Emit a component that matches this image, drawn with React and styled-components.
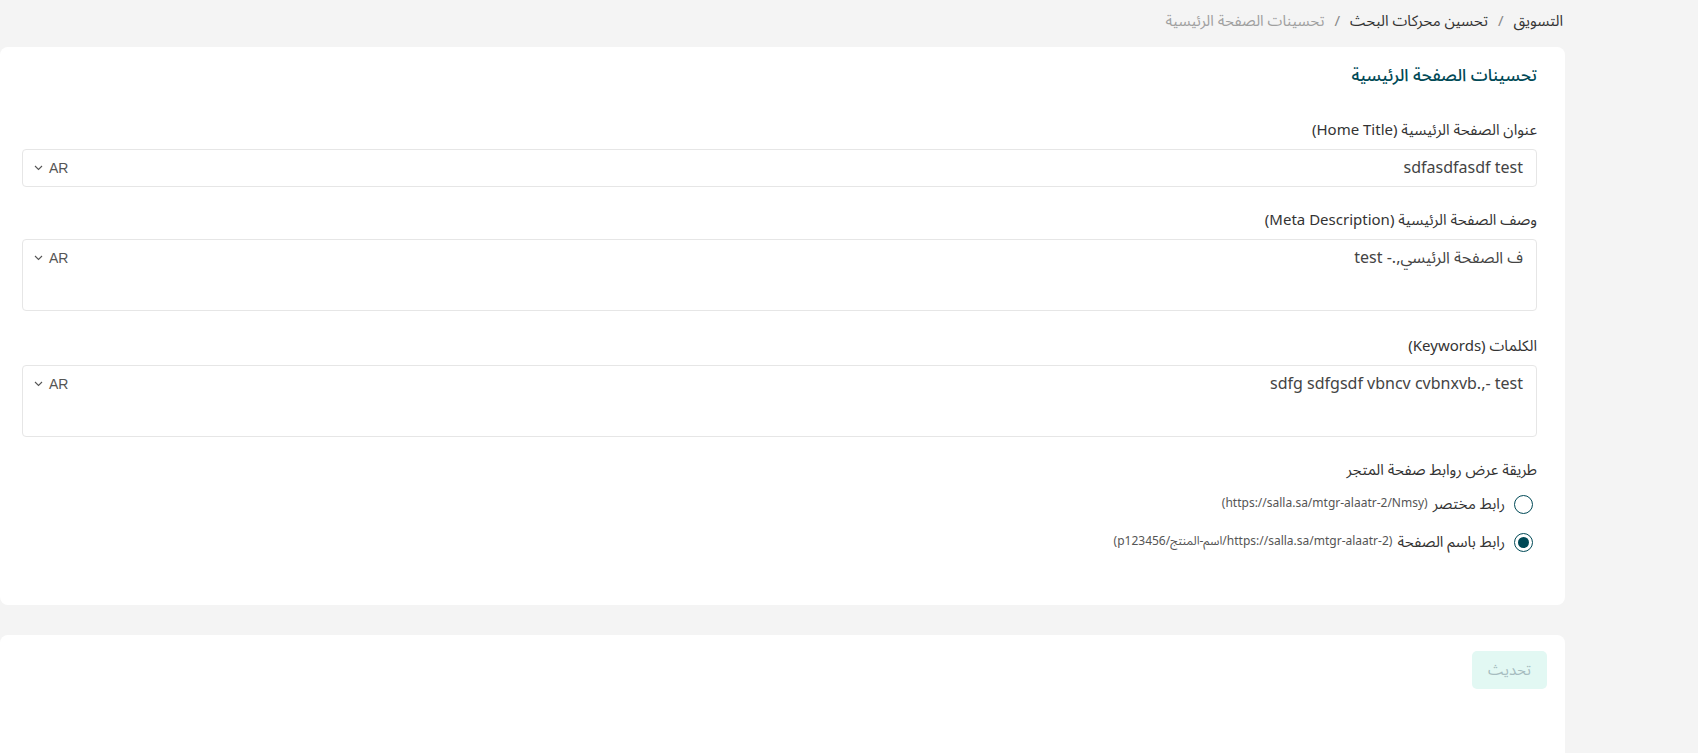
import React from 'react';
import styled, { createGlobalStyle } from 'styled-components';

const GlobalStyle = createGlobalStyle`
  html, body {
    margin: 0;
    padding: 0;
    background: #f4f4f4;
    font-family: "Noto Sans Arabic", "Noto Sans", "DejaVu Sans", sans-serif;
  }
  * { box-sizing: border-box; }
`;

const Page = styled.div`
  direction: rtl;
  min-height: 753px;
  padding-right: 133px;
  overflow: hidden;
`;

const Breadcrumb = styled.nav`
  height: 47px;
  display: flex;
  align-items: center;
  gap: 8px;
  padding: 0 2px 6px 0;
  font-size: 15px;
  color: #333;
`;

const Crumb = styled.span`
  color: ${(p) => (p.$current ? '#a0a0a0' : '#333')};
`;

const Sep = styled.span`
  color: #888;
  padding: 0 2px;
`;

const Card = styled.section`
  background: #fff;
  border-radius: 8px;
  padding: ${(p) => p.$pad};
  min-height: ${(p) => p.$minH || 'auto'};
`;

const Title = styled.h2`
  margin: 0 0 32px;
  font-size: 17px;
  line-height: 24px;
  font-weight: 500;
  color: #004956;
`;

const Field = styled.div`
  margin-bottom: ${(p) => p.$gap || '23px'};
`;

const Label = styled.div`
  font-size: 15px;
  line-height: 20px;
  color: #333;
  margin-bottom: 9px;
`;

const InputBox = styled.div`
  display: flex;
  align-items: ${(p) => (p.$multi ? 'flex-start' : 'center')};
  justify-content: space-between;
  height: ${(p) => (p.$multi ? '72px' : '38px')};
  border: 1px solid #e6e6e6;
  border-radius: 4px;
  padding: ${(p) => (p.$multi ? '8px 13px 0 11px' : '0 13px 0 11px')};
`;

const Value = styled.span`
  font-size: 16px;
  line-height: 20px;
  color: #444;
`;

const Lang = styled.span`
  display: flex;
  align-items: center;
  gap: 6px;
  direction: ltr;
  font-family: "Liberation Sans", Arial, sans-serif;
  font-size: 14px;
  line-height: 20px;
  color: #555;
`;

const RadioList = styled.div`
  display: flex;
  flex-direction: column;
  gap: 18px;
  padding-right: 4px;
  margin-top: 14px;
`;

const RadioRow = styled.label`
  display: flex;
  align-items: center;
  gap: 9px;
  font-size: 15px;
  color: #333;
  line-height: 20px;
`;

const Circle = styled.span`
  width: 19px;
  height: 19px;
  border-radius: 50%;
  border: 1.5px solid #004956;
  display: flex;
  align-items: center;
  justify-content: center;
  flex-shrink: 0;
  &::after {
    content: '';
    width: 11px;
    height: 11px;
    border-radius: 50%;
    background: ${(p) => (p.$on ? '#004956' : 'transparent')};
  }
`;

const Url = styled.span`
  font-size: 12px;
  color: #555;
  margin-right: -4px;
`;

const Footer = styled.div`
  margin-top: 30px;
`;

const Button = styled.button`
  display: block;
  width: 75px;
  height: 38px;
  border: none;
  border-radius: 5px;
  background: #e2f8f3;
  color: #a6bcbf;
  font-family: inherit;
  font-size: 15px;
`;

const Chevron = () => (
  <svg width="9" height="6" viewBox="0 0 9 6" fill="none">
    <path d="M1 1l3.5 3.5L8 1" stroke="#555" strokeWidth="1.1" />
  </svg>
);

const LangPick = () => (
  <Lang>
    <Chevron />
    AR
  </Lang>
);

export default function App() {
  return (
    <>
      <GlobalStyle />
      <Page>
        <Breadcrumb>
          <Crumb>التسويق</Crumb>
          <Sep>/</Sep>
          <Crumb>تحسين محركات البحث</Crumb>
          <Sep>/</Sep>
          <Crumb $current>تحسينات الصفحة الرئيسية</Crumb>
        </Breadcrumb>

        <Card $pad="17px 28px 53px 22px">
          <Title>تحسينات الصفحة الرئيسية</Title>

          <Field>
            <Label>عنوان الصفحة الرئيسية (Home Title)</Label>
            <InputBox>
              <Value>sdfasdfasdf test</Value>
              <LangPick />
            </InputBox>
          </Field>

          <Field $gap="25px">
            <Label>وصف الصفحة الرئيسية (Meta Description)</Label>
            <InputBox $multi>
              <Value>ف الصفحة الرئيسي,.- test</Value>
              <LangPick />
            </InputBox>
          </Field>

          <Field>
            <Label>الكلمات (Keywords)</Label>
            <InputBox $multi>
              <Value>sdfg sdfgsdf vbncv cvbnxvb.,- test</Value>
              <LangPick />
            </InputBox>
          </Field>

          <Label>طريقة عرض روابط صفحة المتجر</Label>
          <RadioList>
            <RadioRow>
              <Circle />
              رابط مختصر
              <Url>(https://salla.sa/mtgr-alaatr-2/Nmsy)</Url>
            </RadioRow>
            <RadioRow>
              <Circle $on />
              رابط باسم الصفحة
              <Url>(https://salla.sa/mtgr-alaatr-2/اسم-المنتج/p123456)</Url>
            </RadioRow>
          </RadioList>
        </Card>

        <Footer>
          <Card $pad="16px 18px 20px 18px" $minH="140px">
            <Button>تحديث</Button>
          </Card>
        </Footer>
      </Page>
    </>
  );
}
